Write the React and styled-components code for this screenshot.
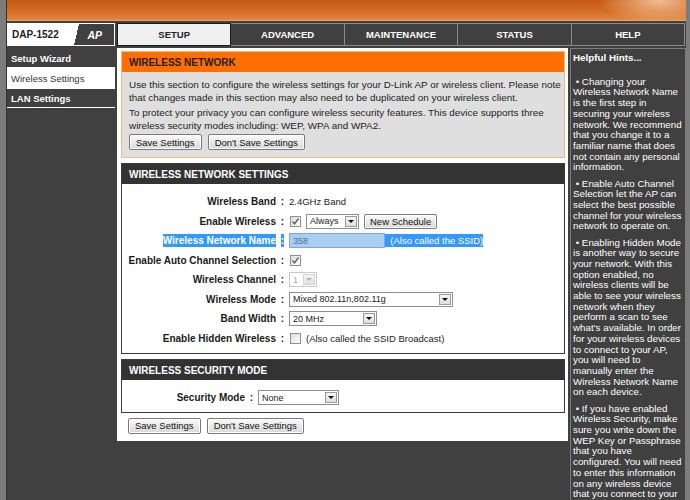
import React from 'react';
import styled, { createGlobalStyle } from 'styled-components';

const Global = createGlobalStyle`
  html, body { margin: 0; padding: 0; background: #7c7c7c; }
  body { font-family: "Liberation Sans", Arial, sans-serif; }
  * { box-sizing: border-box; }
`;

const Page = styled.div`
  width: 690px;
  height: 500px;
  overflow: hidden;
  padding-left: 6px;
  background: #7c7c7c;
`;

const Frame = styled.div`
  width: 680px;
  height: 100%;
  background: #404040;
  border-left: 1px solid #333;
  display: flex;
  flex-direction: column;
  overflow: hidden;
`;

const Header = styled.div`
  height: 21px;
  flex: none;
  background:
    radial-gradient(ellipse 60px 24px at 96% 0%, rgba(255, 225, 190, 0.75), rgba(255, 200, 150, 0) 100%),
    linear-gradient(to bottom, #c65a14 0%, #d46c26 55%, #e28640 100%);
  border-bottom: 1px solid #e9a36c;
`;

const Nav = styled.div`
  margin-top: 2px;
  height: 23px;
  flex: none;
  display: flex;
  gap: 2px;
`;

const Product = styled.div`
  width: 108px;
  flex: none;
  border: 1px solid #fff;
  background: linear-gradient(103deg, #fff 0 64%, #404040 64%);
  display: flex;
  align-items: center;
  justify-content: space-between;
  padding: 0 12px 0 4px;
  font-weight: bold;
  font-size: 10px;
`;

const ProductName = styled.span`
  color: #222;
`;

const ProductAP = styled.span`
  color: #fff;
  font-style: italic;
  font-size: 10.5px;
`;

const Tabs = styled.div`
  width: 568px;
  flex: none;
  display: flex;
`;

const Tab = styled.div`
  flex: 1;
  display: flex;
  align-items: center;
  justify-content: center;
  font-weight: bold;
  font-size: 9.5px;
  color: ${p => (p.$active ? '#222' : '#fff')};
  background: ${p => (p.$active ? '#f0f0f0' : '#404040')};
  border: 1px solid ${p => (p.$active ? '#1c1c1c' : '#8a8a8a')};
  border-left-width: ${p => (p.$active ? '1px' : '0')};
`;

const Body = styled.div`
  margin-top: 2px;
  display: grid;
  grid-template-columns: 108px 451px 116px;
  column-gap: 2px;
  align-items: start;
`;

const Sidebar = styled.div`
  display: flex;
  flex-direction: column;
`;

const SideItem = styled.div`
  height: ${p => p.$h}px;
  padding-top: ${p => p.$pt || 0}px;
  border-bottom: 1px solid #fff;
  padding-left: 4px;
  display: flex;
  align-items: center;
  font-size: 9.5px;
  font-weight: ${p => (p.$active ? 'normal' : 'bold')};
  color: ${p => (p.$active ? '#333' : '#fff')};
  background: ${p => (p.$active ? '#fff' : '#404040')};
`;

const Main = styled.div`
  background: #fff;
  padding: 3px 3px 7px 4px;
  font-size: 9.9px;
  color: #222;
`;

const Section = styled.div`
  border: 1px solid ${p => (p.$orange ? '#f2b985' : '#3a3a3a')};
  margin-bottom: 5px;
`;

const SectionHead = styled.div`
  height: 20px;
  display: flex;
  align-items: center;
  padding-left: 7px;
  font-weight: bold;
  font-size: 10px;
  color: ${p => (p.$orange ? '#1e1e1e' : '#fff')};
  background: ${p => (p.$orange ? '#ff6f00' : '#333')};
`;

const Intro = styled.div`
  background: #dfdfdf;
  padding: 6px 2px 7px 7px;
  line-height: 13px;
`;

const Para = styled.p`
  margin: 0 0 2px;
  white-space: nowrap;
`;

const Buttons = styled.div`
  display: flex;
  gap: 6px;
  margin: ${p => p.$m || '2px 0 0'};
  padding-left: ${p => p.$pl || '0'};
`;

const Button = styled.div`
  height: 16px;
  padding: 0 6px;
  display: flex;
  align-items: center;
  font-size: 9.5px;
  color: #111;
  border: 1px solid #7a7a7a;
  border-radius: 2px;
  background: linear-gradient(to bottom, #fafafa, #e6e6e6 60%, #d8d8d8);
  box-shadow: inset 0 0 0 1px #fff;
  white-space: nowrap;
`;

const Fields = styled.div`
  padding: ${p => p.$pad || '8px 0 5px'};
`;

const Row = styled.div`
  display: grid;
  grid-template-columns: ${p => p.$labelW || 154}px 13px 1fr;
  height: 19.5px;
  align-items: center;
`;

const Label = styled.div`
  text-align: right;
  font-weight: bold;
  font-size: 10px;
  color: #1a1a1a;
  white-space: nowrap;
`;

const Hl = styled.span`
  background: ${p => (p.$on ? '#3399ff' : 'transparent')};
  color: ${p => (p.$on ? '#fff' : 'inherit')};
  padding: 1px 0;
`;

const Colon = styled.div`
  text-align: center;
  font-weight: bold;
  font-size: 10px;
`;

const Value = styled.div`
  display: flex;
  align-items: center;
  gap: ${p => (p.$tight ? '0' : '5px')};
  font-size: 9.5px;
  color: #222;
  white-space: nowrap;
`;

const Check = styled.div`
  width: 11px;
  height: 11px;
  margin-left: 1px;
  border: 1px solid #8f8f8f;
  background: linear-gradient(135deg, #dcdcdc, #fff);
  display: flex;
  align-items: center;
  justify-content: center;
`;

const SelectBox = styled.div`
  width: ${p => p.$w}px;
  height: 15px;
  border: 1px solid ${p => (p.$disabled ? '#c9c9c9' : '#8e8e8e')};
  background: #fff;
  display: flex;
  align-items: center;
  justify-content: space-between;
  padding: 0 1px 0 3px;
  font-size: 9px;
  color: ${p => (p.$disabled ? '#aaa' : '#222')};
`;

const Arrow = styled.div`
  width: 12px;
  height: 11px;
  border: 1px solid ${p => (p.$disabled ? '#d4d4d4' : '#9a9a9a')};
  background: linear-gradient(to bottom, #f6f6f6, #dedede);
  display: flex;
  align-items: center;
  justify-content: center;
  &::after {
    content: '';
    border-left: 3px solid transparent;
    border-right: 3px solid transparent;
    border-top: 3px solid ${p => (p.$disabled ? '#b0b0b0' : '#111')};
  }
`;

const TextInput = styled.div`
  width: 96px;
  height: 15px;
  border: 1px solid #7fa9d6;
  background: #a9cef2;
  color: #4d6f95;
  font-size: 9px;
  display: flex;
  align-items: center;
  padding-left: 3px;
`;

const SmallBtn = styled(Button)`
  height: 15px;
  padding: 0 5px;
`;

const Hints = styled.div`
  background: #404040;
  border: 1px solid #7c7c7c;
  height: 470px;
  padding: 4px 0 0 2px;
  color: #fff;
  font-size: 9.8px;
  line-height: 10.7px;
  overflow: hidden;
`;

const HintsTitle = styled.div`
  font-weight: bold;
  font-size: 9.8px;
  margin-bottom: 13px;
`;

const Hint = styled.p`
  margin: 0 0 5.5px;
  white-space: pre;
`;

const CheckMark = ({ on }) => (
  <Check>
    {on && (
      <svg width="9" height="9" viewBox="0 0 9 9">
        <path d="M1.5 4.5 L3.5 7 L7.5 1.5" fill="none" stroke="#5a5a5a" strokeWidth="1.3" />
      </svg>
    )}
  </Check>
);

const Select = ({ w, children, disabled }) => (
  <SelectBox $w={w} $disabled={disabled}>
    <span>{children}</span>
    <Arrow $disabled={disabled} />
  </SelectBox>
);

const hints = [
  '\u00a0\u2022 Changing your\nWireless Network Name\nis the first step in\nsecuring your wireless\nnetwork. We recommend\nthat you change it to a\nfamiliar name that does\nnot contain any personal\ninformation.',
  '\u00a0\u2022 Enable Auto Channel\nSelection let the AP can\nselect the best possible\nchannel for your wireless\nnetwork to operate on.',
  "\u00a0\u2022 Enabling Hidden Mode\nis another way to secure\nyour network. With this\noption enabled, no\nwireless clients will be\nable to see your wireless\nnetwork when they\nperform a scan to see\nwhat's available. In order\nfor your wireless devices\nto connect to your AP,\nyou will need to\nmanually enter the\nWireless Network Name\non each device.",
  '\u00a0\u2022 If you have enabled\nWireless Security, make\nsure you write down the\nWEP Key or Passphrase\nthat you have\nconfigured. You will need\nto enter this information\non any wireless device\nthat you connect to your\nwireless network.',
];

export default function App() {
  return (
    <>
      <Global />
      <Page>
        <Frame>
          <Header />
          <Nav>
            <Product>
              <ProductName>DAP-1522</ProductName>
              <ProductAP>AP</ProductAP>
            </Product>
            <Tabs>
              <Tab $active>SETUP</Tab>
              <Tab>ADVANCED</Tab>
              <Tab>MAINTENANCE</Tab>
              <Tab>STATUS</Tab>
              <Tab>HELP</Tab>
            </Tabs>
          </Nav>
          <Body>
            <Sidebar>
              <SideItem $h={20} $pt={2}>Setup Wizard</SideItem>
              <SideItem $h={21} $active>Wireless Settings</SideItem>
              <SideItem $h={19} $pt={1}>LAN Settings</SideItem>
            </Sidebar>
            <Main>
              <Section $orange>
                <SectionHead $orange>WIRELESS NETWORK</SectionHead>
                <Intro>
                  <Para>
                    Use this section to configure the wireless settings for your D-Link AP or wireless client. Please note
                    <br />
                    that changes made in this section may also need to be duplicated on your wireless client.
                  </Para>
                  <Para>
                    To protect your privacy you can configure wireless security features. This device supports three
                    <br />
                    wireless security modes including: WEP, WPA and WPA2.
                  </Para>
                  <Buttons>
                    <Button>Save Settings</Button>
                    <Button>Don't Save Settings</Button>
                  </Buttons>
                </Intro>
              </Section>

              <Section>
                <SectionHead>WIRELESS NETWORK SETTINGS</SectionHead>
                <Fields>
                  <Row>
                    <Label>Wireless Band</Label>
                    <Colon>:</Colon>
                    <Value>2.4GHz Band</Value>
                  </Row>
                  <Row>
                    <Label>Enable Wireless</Label>
                    <Colon>:</Colon>
                    <Value>
                      <CheckMark on />
                      <Select w={53}>Always</Select>
                      <SmallBtn>New Schedule</SmallBtn>
                    </Value>
                  </Row>
                  <Row>
                    <Label><Hl $on>Wireless Network Name</Hl></Label>
                    <Colon><Hl $on>:</Hl></Colon>
                    <Value $tight>
                      <TextInput>358</TextInput>
                      <Hl $on>&nbsp;&nbsp;(Also called the SSID)</Hl>
                    </Value>
                  </Row>
                  <Row>
                    <Label>Enable Auto Channel Selection</Label>
                    <Colon>:</Colon>
                    <Value><CheckMark on /></Value>
                  </Row>
                  <Row>
                    <Label>Wireless Channel</Label>
                    <Colon>:</Colon>
                    <Value><Select w={28} disabled>1</Select></Value>
                  </Row>
                  <Row>
                    <Label>Wireless Mode</Label>
                    <Colon>:</Colon>
                    <Value><Select w={164}>Mixed 802.11n,802.11g</Select></Value>
                  </Row>
                  <Row>
                    <Label>Band Width</Label>
                    <Colon>:</Colon>
                    <Value><Select w={88}>20 MHz</Select></Value>
                  </Row>
                  <Row>
                    <Label>Enable Hidden Wireless</Label>
                    <Colon>:</Colon>
                    <Value>
                      <CheckMark />
                      <span>(Also called the SSID Broadcast)</span>
                    </Value>
                  </Row>
                </Fields>
              </Section>

              <Section>
                <SectionHead>WIRELESS SECURITY MODE</SectionHead>
                <Fields $pad="8px 0 4px">
                  <Row $labelW={123}>
                    <Label>Security Mode</Label>
                    <Colon>:</Colon>
                    <Value><Select w={81}>None</Select></Value>
                  </Row>
                </Fields>
              </Section>

              <Buttons $m="0" $pl="7px">
                <Button>Save Settings</Button>
                <Button>Don't Save Settings</Button>
              </Buttons>
            </Main>
            <Hints>
              <HintsTitle>Helpful Hints...</HintsTitle>
              {hints.map((h, i) => (
                <Hint key={i}>{h}</Hint>
              ))}
            </Hints>
          </Body>
        </Frame>
      </Page>
    </>
  );
}
